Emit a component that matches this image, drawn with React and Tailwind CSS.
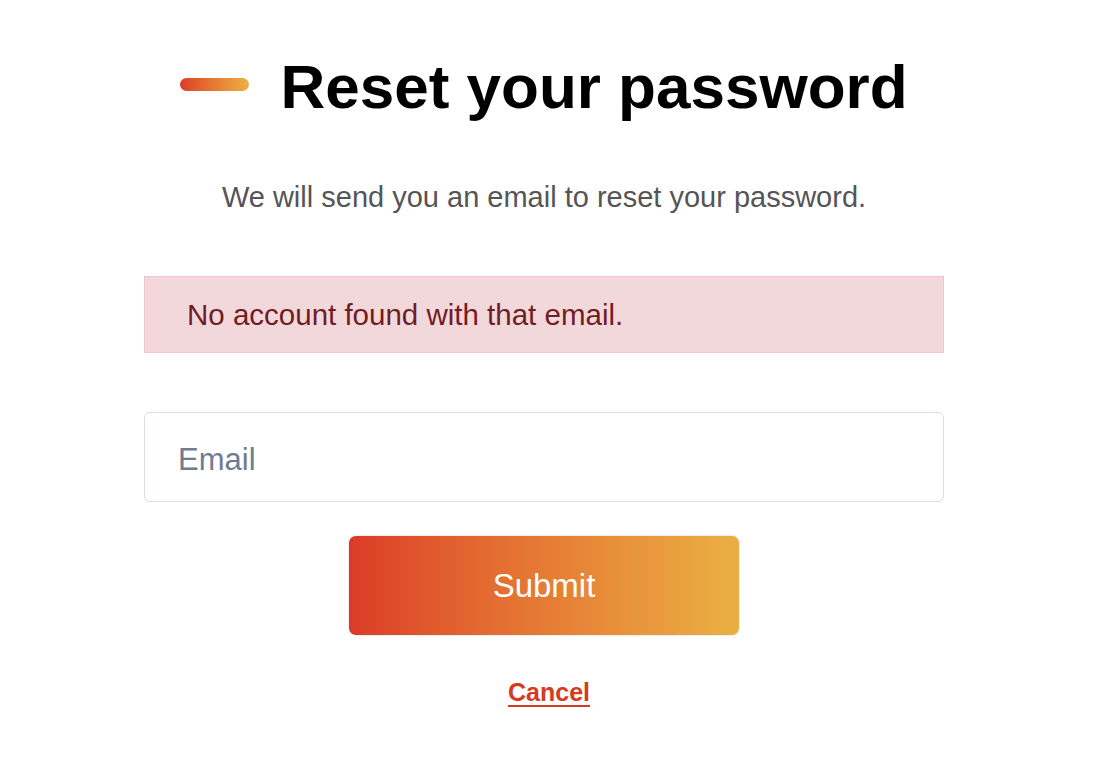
import React from 'react';

function Heading() {
  return (
    <div className="flex flex-row items-center justify-center gap-[31px]">
      <span className="block w-[69px] h-[13px] mb-[6px] rounded-full bg-gradient-to-r from-[#db3b27] to-[#eab043]"></span>
      <h1 className="text-[62px] leading-[72px] font-bold text-black">
        Reset your password
      </h1>
    </div>
  );
}

export default function App() {
  return (
    <div
      className="min-h-screen bg-white w-[1088px]"
      style={{ fontFamily: '"Liberation Sans", Arial, sans-serif' }}
    >
      <div className="w-[800px] mx-auto pt-[51px] flex flex-col">
        <Heading />

        <p className="mt-[56px] text-center text-[29px] leading-[36px] text-[#555555]">
          We will send you an email to reset your password.
        </p>

        <div className="mt-[61px] h-[77px] flex items-center pl-[42px] bg-[#f2d8da] border border-[#efc6ca] text-[#721c24] text-[29.5px] leading-[36px]">
          No account found with that email.
        </div>

        <input
          type="email"
          placeholder="Email"
          className="mt-[59px] h-[90px] w-full rounded-[6px] border border-[#d9dde4] bg-white pl-[33px] pt-[5px] text-[31px] text-gray-800 placeholder:text-[#6f7c94] outline-none"
        />

        <button
          type="button"
          className="mt-[33px] mx-auto w-[392px] h-[101px] rounded-[8px] border border-[#eeeeee] bg-gradient-to-r from-[#db3b27] to-[#eab043] text-white text-[33px]"
        >
          Submit
        </button>

        <a
          href="#"
          className="mt-[41px] ml-[10px] self-center text-[25px] leading-[30px] font-bold text-[#d63a22] underline underline-offset-[4px]"
        >
          Cancel
        </a>
      </div>
    </div>
  );
}
